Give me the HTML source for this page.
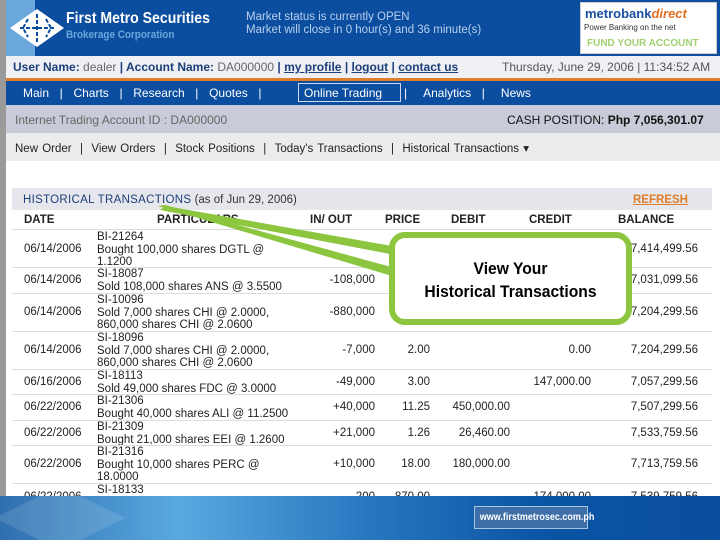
<!DOCTYPE html>
<html><head><style>
*{margin:0;padding:0;box-sizing:border-box}
body{width:720px;height:540px;overflow:hidden;background:#fff;font-family:"Liberation Sans",sans-serif;position:relative}
.abs{position:absolute}
.t{font-size:11.5px;color:#222;white-space:nowrap;position:absolute}
.r{text-align:right}
.hl{position:absolute;left:12px;right:8px;height:1px;background:#ddd}
</style></head><body>
<div class="abs" style="left:0;top:0;width:6px;height:496px;background:#9a9a9a"></div>
<div class="abs" style="left:6px;top:0;width:714px;height:56px;background:#0b4d9e"></div>
<div class="abs" style="left:6px;top:0;width:29px;height:56px;background:#6aa7dc"></div>
<svg class="abs" style="left:8px;top:8px" width="58" height="40" viewBox="0 0 58 40"><path d="M29 1 L56 20 L29 39 L2 20Z" fill="#fff"/><path d="M12 20h34M29 6v28M20 11l-5 9 5 9M38 11l5 9-5 9" stroke="#0b4d9e" stroke-width="2" fill="none" stroke-dasharray="4 2"/></svg>
<div class="abs" style="left:66px;top:10px;color:#fff;font:bold 16px 'Liberation Sans',sans-serif;transform:scaleX(.88);transform-origin:left">First Metro Securities</div>
<div class="abs" style="left:66px;top:29px;color:#6aa7dc;font:bold 11px 'Liberation Sans',sans-serif;transform:scaleX(.9);transform-origin:left">Brokerage Corporation</div>
<div class="abs" style="left:246px;top:11px;color:#b8d0f0;font-size:11.5px;line-height:13px">Market status is currently OPEN<br>Market will close in 0 hour(s) and 36 minute(s)</div>
<div class="abs" style="left:580px;top:2px;width:137px;height:52px;background:#fff;border:1px solid #ccc"></div>
<div class="abs" style="left:585px;top:6px;color:#1a4fa0;font:bold 13px 'Liberation Sans',sans-serif">metrobank<span style="color:#e07020;font-style:italic">direct</span></div>
<div class="abs" style="left:584px;top:23px;color:#333;font-size:8px">Power Banking on the net</div>
<div class="abs" style="left:587px;top:38px;color:#a0d070;font:bold 10px 'Liberation Sans',sans-serif">FUND YOUR ACCOUNT</div>
<div class="abs" style="left:6px;top:56px;width:714px;height:22px;background:#eef0f4"></div>
<div class="abs" style="left:13px;top:60px;font-size:12px;color:#1d3f7a;white-space:nowrap"><b>User Name:</b> <span style="color:#666">dealer</span> <b>| Account Name:</b> <span style="color:#666">DA000000</span> <b>| <u>my profile</u> | <u>logout</u> | <u>contact us</u></b></div>
<div class="abs" style="left:502px;top:60px;font-size:12px;color:#555;white-space:nowrap">Thursday, June 29, 2006 | 11:34:52 AM</div>
<div class="abs" style="left:6px;top:78px;width:714px;height:3px;background:#e07d2a"></div>
<div class="abs" style="left:6px;top:81px;width:714px;height:24px;background:#0b4d9e"></div>
<div class="abs" style="left:23px;top:86px;color:#fff;font-size:12px;white-space:nowrap;word-spacing:2px">Main &nbsp;| &nbsp;Charts &nbsp;| &nbsp;Research &nbsp;| &nbsp;Quotes &nbsp;|</div>
<div class="abs" style="left:298px;top:83px;width:103px;height:19px;border:1px solid #cfd8e8"></div>
<div class="abs" style="left:304px;top:86px;color:#fff;font-size:12px;white-space:nowrap">Online Trading</div>
<div class="abs" style="left:404px;top:86px;color:#fff;font-size:12px;white-space:nowrap;word-spacing:2px">| &nbsp;&nbsp;Analytics &nbsp;| &nbsp;&nbsp;News</div>
<div class="abs" style="left:6px;top:105px;width:714px;height:28px;background:#c9cbd8"></div>
<div class="abs" style="left:15px;top:113px;color:#666;font-size:12px">Internet Trading Account ID : DA000000</div>
<div class="abs" style="left:507px;top:113px;color:#111;font-size:12px;white-space:nowrap">CASH POSITION: <b>Php 7,056,301.07</b></div>
<div class="abs" style="left:6px;top:133px;width:714px;height:28px;background:#ececec"></div>
<div class="abs" style="left:15px;top:141px;color:#222;font-size:11.5px;white-space:nowrap;word-spacing:1px">New Order &nbsp;| &nbsp;View Orders &nbsp;| &nbsp;Stock Positions &nbsp;| &nbsp;Today's Transactions &nbsp;| &nbsp;Historical Transactions ▾</div>
<div class="abs" style="left:12px;top:188px;width:700px;height:22px;background:#e6e7ec"></div>
<div class="t" style="left:23px;top:194px;color:#1d3f7a"><span style="color:#1d3f7a;letter-spacing:.3px">HISTORICAL TRANSACTIONS</span> <span style="color:#333">(as of Jun 29, 2006)</span></div>
<div class="t" style="left:633px;top:194px;color:#e07d2a;font-weight:bold;text-decoration:underline">REFRESH</div>
<div class="t" style="left:24px;top:214px;font-weight:bold">DATE</div>
<div class="t" style="left:157px;top:214px;font-weight:bold">PARTICULARS</div>
<div class="t" style="left:310px;top:214px;font-weight:bold">IN/ OUT</div>
<div class="t" style="left:385px;top:214px;font-weight:bold">PRICE</div>
<div class="t" style="left:451px;top:214px;font-weight:bold">DEBIT</div>
<div class="t" style="left:529px;top:214px;font-weight:bold">CREDIT</div>
<div class="t" style="left:618px;top:214px;font-weight:bold">BALANCE</div>
<div class="hl" style="top:229px"></div>
<div class="t" style="left:24px;top:243px">06/14/2006</div><div class="t" style="left:97px;top:231px;line-height:12.5px">BI-21264<br>Bought 100,000 shares DGTL @<br>1.1200</div><div class="t r" style="right:22px;top:243px">7,414,499.56</div>
<div class="hl" style="top:267px"></div>
<div class="t" style="left:24px;top:274px">06/14/2006</div><div class="t" style="left:97px;top:268px;line-height:12.5px">SI-18087<br>Sold 108,000 shares ANS @ 3.5500</div><div class="t r" style="right:345px;top:274px">-108,000</div><div class="t r" style="right:22px;top:274px">7,031,099.56</div>
<div class="hl" style="top:293px"></div>
<div class="t" style="left:24px;top:306px">06/14/2006</div><div class="t" style="left:97px;top:294px;line-height:12.5px">SI-10096<br>Sold 7,000 shares CHI @ 2.0000,<br>860,000 shares CHI @ 2.0600</div><div class="t r" style="right:345px;top:306px">-880,000</div><div class="t r" style="right:22px;top:306px">7,204,299.56</div>
<div class="hl" style="top:331px"></div>
<div class="t" style="left:24px;top:344px">06/14/2006</div><div class="t" style="left:97px;top:332px;line-height:12.5px">SI-18096<br>Sold 7,000 shares CHI @ 2.0000,<br>860,000 shares CHI @ 2.0600</div><div class="t r" style="right:345px;top:344px">-7,000</div><div class="t r" style="right:290px;top:344px">2.00</div><div class="t r" style="right:129px;top:344px">0.00</div><div class="t r" style="right:22px;top:344px">7,204,299.56</div>
<div class="hl" style="top:369px"></div>
<div class="t" style="left:24px;top:376px">06/16/2006</div><div class="t" style="left:97px;top:370px;line-height:12.5px">SI-18113<br>Sold 49,000 shares FDC @ 3.0000</div><div class="t r" style="right:345px;top:376px">-49,000</div><div class="t r" style="right:290px;top:376px">3.00</div><div class="t r" style="right:129px;top:376px">147,000.00</div><div class="t r" style="right:22px;top:376px">7,057,299.56</div>
<div class="hl" style="top:394px"></div>
<div class="t" style="left:24px;top:401px">06/22/2006</div><div class="t" style="left:97px;top:395px;line-height:12.5px">BI-21306<br>Bought 40,000 shares ALI @ 11.2500</div><div class="t r" style="right:345px;top:401px">+40,000</div><div class="t r" style="right:290px;top:401px">11.25</div><div class="t r" style="right:210px;top:401px">450,000.00</div><div class="t r" style="right:22px;top:401px">7,507,299.56</div>
<div class="hl" style="top:420px"></div>
<div class="t" style="left:24px;top:427px">06/22/2006</div><div class="t" style="left:97px;top:421px;line-height:12.5px">BI-21309<br>Bought 21,000 shares EEI @ 1.2600</div><div class="t r" style="right:345px;top:427px">+21,000</div><div class="t r" style="right:290px;top:427px">1.26</div><div class="t r" style="right:210px;top:427px">26,460.00</div><div class="t r" style="right:22px;top:427px">7,533,759.56</div>
<div class="hl" style="top:445px"></div>
<div class="t" style="left:24px;top:458px">06/22/2006</div><div class="t" style="left:97px;top:446px;line-height:12.5px">BI-21316<br>Bought 10,000 shares PERC @<br>18.0000</div><div class="t r" style="right:345px;top:458px">+10,000</div><div class="t r" style="right:290px;top:458px">18.00</div><div class="t r" style="right:210px;top:458px">180,000.00</div><div class="t r" style="right:22px;top:458px">7,713,759.56</div>
<div class="hl" style="top:483px"></div>
<div class="t" style="left:97px;top:484px">SI-18133</div>
<div class="t" style="left:24px;top:491px">06/22/2006</div><div class="t r" style="right:345px;top:491px">-200</div><div class="t r" style="right:290px;top:491px">870.00</div><div class="t r" style="right:129px;top:491px">174,000.00</div><div class="t r" style="right:22px;top:491px">7,539,759.56</div>
<svg class="abs" style="left:0;top:0" width="720" height="540">
<polygon points="158,206 165,205 395,268 392,276" fill="#8cc63f"/>
<polygon points="160,210 166,206 392,246 390,254" fill="#8cc63f"/>
</svg>
<div class="abs" style="left:389px;top:232px;width:243px;height:93px;border:6px solid #8cc63f;border-radius:16px;background:#fff"></div>
<div class="abs" style="left:389px;top:257px;width:243px;text-align:center;font:bold 17px/23px 'Liberation Sans',sans-serif;color:#000;transform:scaleX(.92)">View Your<br>Historical Transactions</div>
<div class="abs" style="left:0;top:496px;width:720px;height:44px;background:linear-gradient(90deg,#2f6fb0 0%,#5aa9e0 25%,#2a78c0 50%,#0a55a5 75%,#0b4d9e 100%)"></div>
<svg class="abs" style="left:0;top:496px" width="130" height="44"><path d="M60 -10 L125 22 L60 54 L-5 22Z" fill="#ffffff" opacity=".12"/></svg>
<div class="abs" style="left:474px;top:506px;width:114px;height:23px;border:1px solid #a8c4e4;background:#3e6fa8"></div>
<div class="abs" style="left:474px;top:506px;width:114px;height:23px;color:#fff;font:bold 10px/23px 'Liberation Sans',sans-serif;text-align:center;white-space:nowrap;transform:scaleX(.9)">www.firstmetrosec.com.ph</div>
</body></html>
